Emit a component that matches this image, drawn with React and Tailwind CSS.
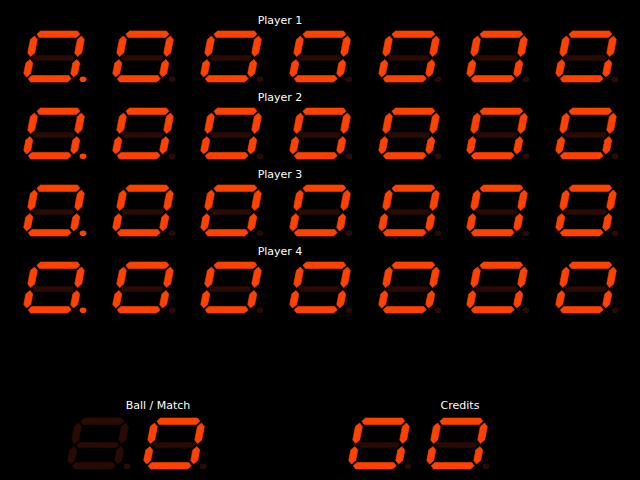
import React from "react";

const ON = "#ff4200";
const OFF = "#2a0b03";

const SEGS = {
  a: "5.5,3.2 8.5,0 45.5,0 48.5,3.2 45.5,6.4 8.5,6.4",
  b: "50.5,5 54,8.5 54,22 50.5,25.5 47,22 47,8.5",
  c: "50.5,28.5 54,32 54,42.5 50.5,46 47,42.5 47,32",
  d: "5.5,47.8 8.5,44.6 45.5,44.6 48.5,47.8 45.5,51 8.5,51",
  e: "3.5,28.5 7,32 7,42.5 3.5,46 0,42.5 0,32",
  f: "3.5,5 7,8.5 7,22 3.5,25.5 0,22 0,8.5",
  g: "6,27 8.5,24.5 45.5,24.5 48,27 45.5,29.5 8.5,29.5",
};

const ZERO = { a: 1, b: 1, c: 1, d: 1, e: 1, f: 1, g: 0 };

function Digit({ dp = false, off = false }) {
  const lit = off ? {} : ZERO;
  return (
    <svg width="64" height="51" viewBox="0 0 64 51" className="block shrink-0 overflow-visible">
      <g transform="translate(10,0) skewX(-11)">
        {Object.keys(SEGS).map((k) => (
          <polygon key={k} points={SEGS[k]} fill={lit[k] ? ON : OFF} strokeLinejoin="round" stroke={lit[k] ? ON : OFF} strokeWidth="0.6" />
        ))}
      </g>
      <ellipse cx="61" cy="48.3" rx="3.4" ry="2.8" fill={dp ? ON : OFF} />
    </svg>
  );
}

function PlayerRow({ label }) {
  return (
    <div className="flex flex-col">
      <div className="h-[13px] ml-[230px] w-[100px] text-center text-[11px] leading-[13px] text-white">
        {label}
      </div>
      <div className="mt-[4px] flex justify-between px-[22px]">
        <Digit dp />
        <Digit />
        <Digit />
        <Digit />
        <Digit />
        <Digit />
        <Digit />
      </div>
    </div>
  );
}

export default function App() {
  return (
    <div className="w-[640px] h-[480px] bg-black overflow-hidden font-['DejaVu_Sans',sans-serif]">
      <div className="flex flex-col pt-[14px] gap-[9px]">
        <PlayerRow label="Player 1" />
        <PlayerRow label="Player 2" />
        <PlayerRow label="Player 3" />
        <PlayerRow label="Player 4" />
      </div>
      <div className="mt-[86px] flex pl-[66px]">
        <div className="flex flex-col w-[140px]">
          <div className="h-[13px] ml-[42px] w-[100px] text-center text-[11px] leading-[13px] text-white whitespace-nowrap">
            Ball / Match
          </div>
          <div className="mt-[6px] flex gap-[12px]">
            <Digit off />
            <Digit />
          </div>
        </div>
        <div className="flex flex-col ml-[141px]">
          <div className="h-[13px] ml-[63px] w-[100px] text-center text-[11px] leading-[13px] text-white">
            Credits
          </div>
          <div className="mt-[6px] flex gap-[14px]">
            <Digit />
            <Digit />
          </div>
        </div>
      </div>
    </div>
  );
}
